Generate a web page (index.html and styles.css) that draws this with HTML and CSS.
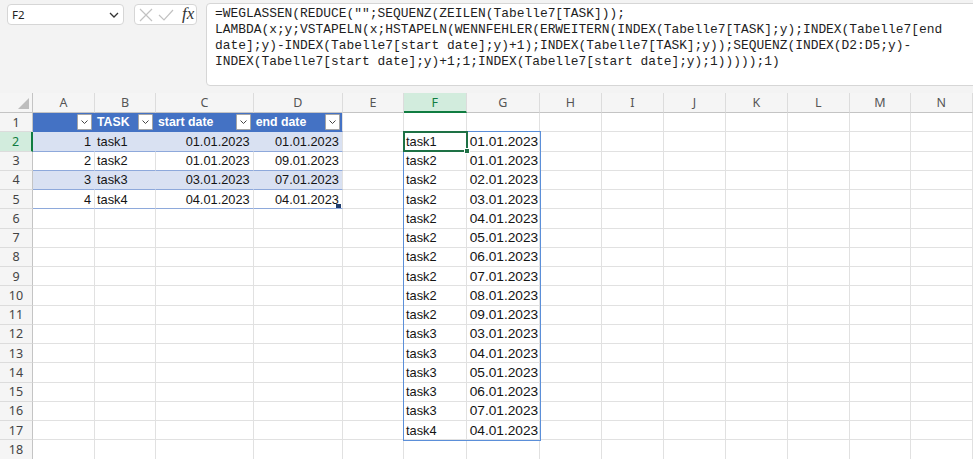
FILE: index.html
```html
<!DOCTYPE html>
<html lang="de">
<head>
<meta charset="utf-8">
<title>Excel</title>
<link rel="stylesheet" href="styles.css">
</head>
<body>
<div class="topbar">
  <div class="namebox"><span>F2</span>
    <svg class="chev" width="10" height="6" viewBox="0 0 10 6"><path d="M1 1 L5 5 L9 1" fill="none" stroke="#333" stroke-width="1.3"/></svg>
  </div>
  <div class="iconbox">
    <svg width="14" height="14" viewBox="0 0 14 14"><path d="M1 1 L13 13 M13 1 L1 13" stroke="#c2c2c2" stroke-width="1.2" fill="none"/></svg>
    <svg width="16" height="12" viewBox="0 0 16 12"><path d="M1 6 L6 11 L15 1" stroke="#c2c2c2" stroke-width="1.2" fill="none"/></svg>
    <span class="fx">fx</span>
  </div>
  <div class="formula">=WEGLASSEN(REDUCE("";SEQUENZ(ZEILEN(Tabelle7[TASK]));
LAMBDA(x;y;VSTAPELN(x;HSTAPELN(WENNFEHLER(ERWEITERN(INDEX(Tabelle7[TASK];y);INDEX(Tabelle7[end
date];y)-INDEX(Tabelle7[start date];y)+1);INDEX(Tabelle7[TASK];y));SEQUENZ(INDEX(D2:D5;y)-
INDEX(Tabelle7[start date];y)+1;1;INDEX(Tabelle7[start date];y);1)))));1)</div>
</div>

<div class="sheet">
  <div class="row hdr">
    <div class="corner"></div><div>A</div><div>B</div><div>C</div><div>D</div><div>E</div><div class="sel">F</div><div>G</div><div>H</div><div>I</div><div>J</div><div>K</div><div>L</div><div>M</div><div>N</div>
  </div>
  <div class="row">
    <div class="rh">1</div>
    <div class="th"><span class="dd"><svg width="7" height="4" viewBox="0 0 7 4"><path d="M0.5 0.5 L3.5 3.5 L6.5 0.5" fill="none" stroke="#444" stroke-width="1"/></svg></span></div>
    <div class="th"><span>TASK</span><span class="dd"><svg width="7" height="4" viewBox="0 0 7 4"><path d="M0.5 0.5 L3.5 3.5 L6.5 0.5" fill="none" stroke="#444" stroke-width="1"/></svg></span></div>
    <div class="th"><span>start date</span><span class="dd"><svg width="7" height="4" viewBox="0 0 7 4"><path d="M0.5 0.5 L3.5 3.5 L6.5 0.5" fill="none" stroke="#444" stroke-width="1"/></svg></span></div>
    <div class="th last"><span>end date</span><span class="dd"><svg width="7" height="4" viewBox="0 0 7 4"><path d="M0.5 0.5 L3.5 3.5 L6.5 0.5" fill="none" stroke="#444" stroke-width="1"/></svg></span></div>
    <div></div><div></div><div></div><div></div><div></div><div></div><div></div><div></div><div></div><div></div>
  </div>
  <div class="row">
    <div class="rh sel">2</div>
    <div class="tc band r">1</div><div class="tc band">task1</div><div class="tc band r">01.01.2023</div><div class="tc band r last">01.01.2023</div>
    <div></div><div>task1</div><div class="d">01.01.2023</div><div></div><div></div><div></div><div></div><div></div><div></div><div></div>
  </div>
  <div class="row">
    <div class="rh">3</div>
    <div class="tc r">2</div><div class="tc">task2</div><div class="tc r">01.01.2023</div><div class="tc r">09.01.2023</div>
    <div></div><div>task2</div><div class="d">01.01.2023</div><div></div><div></div><div></div><div></div><div></div><div></div><div></div>
  </div>
  <div class="row">
    <div class="rh">4</div>
    <div class="tc band r">3</div><div class="tc band">task3</div><div class="tc band r">03.01.2023</div><div class="tc band r last">07.01.2023</div>
    <div></div><div>task2</div><div class="d">02.01.2023</div><div></div><div></div><div></div><div></div><div></div><div></div><div></div>
  </div>
  <div class="row">
    <div class="rh">5</div>
    <div class="tc r">4</div><div class="tc">task4</div><div class="tc r">04.01.2023</div><div class="tc r handle-cell">04.01.2023<span class="tbl-handle"></span></div>
    <div></div><div>task2</div><div class="d">03.01.2023</div><div></div><div></div><div></div><div></div><div></div><div></div><div></div>
  </div>
  <div class="row">
    <div class="rh">6</div><div></div><div></div><div></div><div></div><div></div><div>task2</div><div class="d">04.01.2023</div><div></div><div></div><div></div><div></div><div></div><div></div><div></div>
  </div>
  <div class="row">
    <div class="rh">7</div><div></div><div></div><div></div><div></div><div></div><div>task2</div><div class="d">05.01.2023</div><div></div><div></div><div></div><div></div><div></div><div></div><div></div>
  </div>
  <div class="row">
    <div class="rh">8</div><div></div><div></div><div></div><div></div><div></div><div>task2</div><div class="d">06.01.2023</div><div></div><div></div><div></div><div></div><div></div><div></div><div></div>
  </div>
  <div class="row">
    <div class="rh">9</div><div></div><div></div><div></div><div></div><div></div><div>task2</div><div class="d">07.01.2023</div><div></div><div></div><div></div><div></div><div></div><div></div><div></div>
  </div>
  <div class="row">
    <div class="rh">10</div><div></div><div></div><div></div><div></div><div></div><div>task2</div><div class="d">08.01.2023</div><div></div><div></div><div></div><div></div><div></div><div></div><div></div>
  </div>
  <div class="row">
    <div class="rh">11</div><div></div><div></div><div></div><div></div><div></div><div>task2</div><div class="d">09.01.2023</div><div></div><div></div><div></div><div></div><div></div><div></div><div></div>
  </div>
  <div class="row">
    <div class="rh">12</div><div></div><div></div><div></div><div></div><div></div><div>task3</div><div class="d">03.01.2023</div><div></div><div></div><div></div><div></div><div></div><div></div><div></div>
  </div>
  <div class="row">
    <div class="rh">13</div><div></div><div></div><div></div><div></div><div></div><div>task3</div><div class="d">04.01.2023</div><div></div><div></div><div></div><div></div><div></div><div></div><div></div>
  </div>
  <div class="row">
    <div class="rh">14</div><div></div><div></div><div></div><div></div><div></div><div>task3</div><div class="d">05.01.2023</div><div></div><div></div><div></div><div></div><div></div><div></div><div></div>
  </div>
  <div class="row">
    <div class="rh">15</div><div></div><div></div><div></div><div></div><div></div><div>task3</div><div class="d">06.01.2023</div><div></div><div></div><div></div><div></div><div></div><div></div><div></div>
  </div>
  <div class="row">
    <div class="rh">16</div><div></div><div></div><div></div><div></div><div></div><div>task3</div><div class="d">07.01.2023</div><div></div><div></div><div></div><div></div><div></div><div></div><div></div>
  </div>
  <div class="row">
    <div class="rh">17</div><div></div><div></div><div></div><div></div><div></div><div>task4</div><div class="d">04.01.2023</div><div></div><div></div><div></div><div></div><div></div><div></div><div></div>
  </div>
  <div class="row">
    <div class="rh">18</div><div></div><div></div><div></div><div></div><div></div><div></div><div></div><div></div><div></div><div></div><div></div><div></div><div></div><div></div>
  </div>

  <div class="spill"></div>
  <div class="active"><span class="fill"></span></div>
</div>
</body>
</html>
```

FILE: styles.css
```css
* { box-sizing: border-box; }
html, body { margin: 0; padding: 0; }
body {
  width: 973px;
  height: 459px;
  overflow: hidden;
  background: #f3f3f3;
  font-family: "Liberation Sans", Arial, sans-serif;
  color: #1f1f1f;
}

/* ---------- top bar ---------- */
.topbar {
  height: 93px;
  display: flex;
  align-items: flex-start;
  padding-top: 3px;
  padding-left: 7px;
}
.namebox {
  margin-top: 1px;
  width: 117px;
  height: 21px;
  background: #fff;
  border: 1px solid #d6d6d6;
  border-radius: 4px;
  display: flex;
  align-items: center;
  justify-content: space-between;
  padding: 0 4px 0 4px;
  font-family: "Noto Sans", "Open Sans", sans-serif;
  font-size: 11.5px;
  color: #222;
}
.namebox .chev { margin-top: 1px; }
.iconbox {
  margin-top: 1px;
  margin-left: 10px;
  width: 63px;
  height: 21px;
  background: #fff;
  border: 1px solid #d6d6d6;
  border-radius: 4px;
  display: flex;
  align-items: center;
  gap: 5px;
  padding-left: 4px;
}
.fx {
  font-family: "Liberation Serif", "DejaVu Serif", serif;
  font-style: italic;
  font-size: 17px;
  color: #333;
  margin-left: 3px;
  margin-top: -2px;
}
.formula {
  margin-left: 9px;
  flex: 1;
  height: 83px;
  margin-right: -10px;
  background: #fff;
  border: 1px solid #d6d6d6;
  border-radius: 4px;
  padding: 2px 0 0 8px;
  white-space: pre;
  font-family: "Liberation Mono", "DejaVu Sans Mono", monospace;
  font-size: 12.9px;
  line-height: 16px;
  color: #1e1e1e;
}

/* ---------- sheet ---------- */
.sheet {
  position: relative;
  background: #fff;
  height: 366px;
}
.row {
  display: grid;
  grid-template-columns: 33px 62px 61px 97.7px 89.3px 61px 62.7px 73.3px 62px 62px 62px 62px 61.7px 61.3px 61.7px;
  height: 19.25px;
}
.row > div {
  border-right: 1px solid #e1e1e1;
  border-bottom: 1px solid #e1e1e1;
  display: flex;
  align-items: center;
  padding: 0 2px 0 2px;
  white-space: nowrap;
  overflow: hidden;
  font-size: 12.8px;
  color: #141414;
}

/* column header row */
.row.hdr { height: 20px; }
.row.hdr > div {
  background: #f5f5f5;
  border-right-color: #dcdcdc;
  border-bottom: 1px solid #c4c4c4;
  justify-content: center;
  font-family: "Noto Sans", "Open Sans", sans-serif;
  font-size: 12.5px;
  color: #555;
}
.row.hdr > div.sel {
  background: #d2ecdd;
  color: #107c41;
  border-bottom: 2px solid #107c41;
}
.row.hdr > div.corner {
  position: relative;
  border-right-color: #c4c4c4;
}
.corner::after {
  content: "";
  position: absolute;
  right: 3px;
  bottom: 3px;
  width: 0;
  height: 0;
  border-left: 11px solid transparent;
  border-bottom: 11px solid #bdbdbd;
}

/* row headers */
.row > div.rh {
  background: #f5f5f5;
  justify-content: center;
  border-right: 1px solid #c4c4c4;
  border-bottom-color: #dcdcdc;
  font-family: "Noto Sans", "Open Sans", sans-serif;
  font-size: 12.5px;
  color: #444;
}
.row > div.rh.sel {
  background: #d2ecdd;
  color: #107c41;
  border-right: 2px solid #107c41;
}

/* table */
.row > div.th {
  background: #4472c4;
  border-right-color: #4472c4;
  border-bottom-color: #4472c4;
  color: #fff;
  font-weight: bold;
  font-size: 12.3px;
  padding-right: 2px;
}
.row > div.th.last { border-right-color: #e1e1e1; }
.dd {
  margin-left: auto;
  width: 15px;
  height: 16px;
  background: #fff;
  border: 1px solid #a6a6a6;
  border-radius: 1px;
  display: flex;
  align-items: center;
  justify-content: center;
}
.row > div.tc { border-bottom-color: #8ea9db; }
.row > div.band {
  background: #d9e1f2;
  border-right-color: #d9e1f2;
}
.row > div.band.last { border-right-color: #e1e1e1; }
.row > div.r { justify-content: flex-end; padding-right: 3px; }
.row > div.d { font-size: 13.7px; padding-left: 3px; }

.handle-cell { position: relative; }
.tbl-handle {
  position: absolute;
  right: 1px;
  bottom: 0;
  width: 5px;
  height: 4px;
  background: #1f3d6e;
}

/* overlays */
.spill {
  position: absolute;
  left: 403px;
  top: 38px;
  width: 138px;
  height: 310px;
  border: 1px solid #5b8fd9;
  pointer-events: none;
}
.active {
  position: absolute;
  left: 403px;
  top: 38px;
  width: 65px;
  height: 21px;
  border: 2px solid #1e7145;
  pointer-events: none;
}
.fill {
  position: absolute;
  right: -4px;
  bottom: -4px;
  width: 6px;
  height: 6px;
  background: #1e7145;
  border: 1px solid #fff;
}
```
